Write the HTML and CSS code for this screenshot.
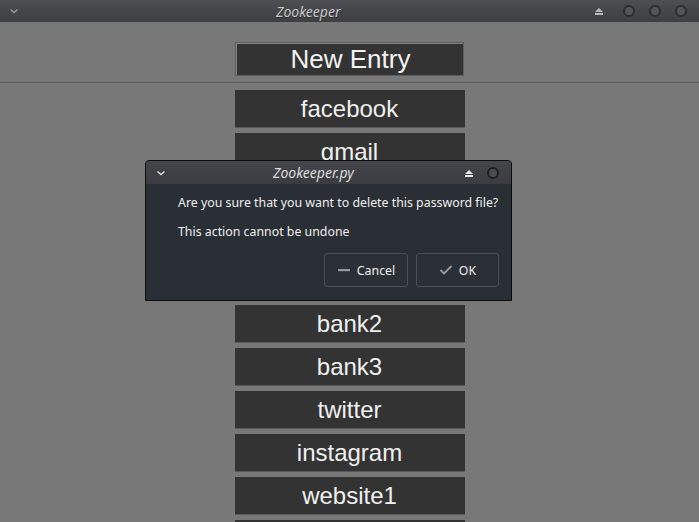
FILE: index.html
```html
<!DOCTYPE html>
<html>
<head>
<meta charset="utf-8">
<link rel="stylesheet" href="styles.css">
</head>
<body>
<div class="titlebar">
  <svg class="chev" width="12" height="8" viewBox="0 0 12 8"><path d="M2.5 2.5 L6 5.5 L9.5 2.5" fill="none" stroke="#9a9ba0" stroke-width="1.4"/></svg>
  <div class="title">Zookeeper</div>
  <div class="tb-icons">
    <svg width="12" height="12" viewBox="0 0 12 12"><path d="M2 7 L6 3 L10 7 Z" fill="#b8b9bd"/><rect x="2" y="8" width="8" height="2" fill="#b8b9bd"/></svg>
    <span class="circ"></span>
    <span class="circ"></span>
    <span class="circ"></span>
  </div>
</div>
<main class="main">
  <div class="newentry">New Entry</div>
  <div class="sep"></div>
  <div class="list">
    <div class="item">facebook</div>
    <div class="item">gmail</div>
    <div class="item">outlook</div>
    <div class="item">amazon</div>
    <div class="item">bank1</div>
    <div class="item">bank2</div>
    <div class="item">bank3</div>
    <div class="item">twitter</div>
    <div class="item">instagram</div>
    <div class="item">website1</div>
    <div class="item">website2</div>
  </div>
</main>
<div class="dialog">
  <div class="dtitlebar">
    <svg class="dchev" width="12" height="8" viewBox="0 0 12 8"><path d="M2.5 2.5 L6 5.5 L9.5 2.5" fill="none" stroke="#e0e0e0" stroke-width="1.4"/></svg>
    <div class="dtitle">Zookeeper.py</div>
    <div class="dt-icons">
      <svg width="12" height="12" viewBox="0 0 12 12"><path d="M2 7 L6 3 L10 7 Z" fill="#e6e6e6"/><rect x="2" y="8" width="8" height="2" fill="#e6e6e6"/></svg>
      <span class="circ dcirc"></span>
    </div>
  </div>
  <div class="dbody">
    <p class="msg1">Are you sure that you want to delete this password file?</p>
    <p class="msg2">This action cannot be undone</p>
    <div class="btns">
      <button class="btn cancel"><svg width="14" height="12" viewBox="0 0 14 12"><rect x="1" y="5" width="12" height="2.2" fill="#9a9ca0"/></svg>Cancel</button>
      <button class="btn ok"><svg width="14" height="12" viewBox="0 0 14 12"><path d="M1.5 6 L5 9.5 L12.5 2" fill="none" stroke="#9a9ca0" stroke-width="1.8"/></svg>OK</button>
    </div>
  </div>
</div>
</body>
</html>
```
FILE: styles.css
```css
html, body {
  margin: 0;
  padding: 0;
}
body {
  width: 699px;
  height: 522px;
  overflow: hidden;
  background: #787878;
  font-family: "Liberation Sans", Arial, sans-serif;
  position: relative;
}
.titlebar {
  height: 22px;
  background: linear-gradient(#4d4e52, #3e3f43);
  display: flex;
  align-items: center;
  position: relative;
}
.chev {
  margin-left: 8px;
}
.title {
  position: absolute;
  left: 276px;
  top: 2px;
  font-family: "Noto Sans", sans-serif;
  font-style: italic;
  font-size: 14px;
  color: #c8c8c8;
  text-shadow: 0 1px 0 #2a2a2a;
}
.tb-icons {
  margin-left: auto;
  margin-right: 12px;
  display: flex;
  align-items: center;
  gap: 14px;
}
.tb-icons svg {
  margin-right: 4px;
}
.circ {
  display: block;
  border-radius: 50%;
  border: 2px solid #2c2d30;
  background: #55565a;
  box-sizing: content-box;
  width: 8px;
  height: 8px;
}
.main {
  display: flex;
  flex-direction: column;
  align-items: center;
}
.newentry {
  margin-top: 20px;
  width: 225px;
  height: 32px;
  background: #333333;
  border: 1px solid #5e5e5e;
  box-shadow: inset 1px 1px 0 #858585;
  color: #f2f2f2;
  font-size: 26px;
  line-height: 33px;
  text-align: center;
  box-sizing: content-box;
  padding-left: 2px;
}
.sep {
  margin-top: 6px;
  width: 100%;
  height: 1px;
  background: #585858;
  border-bottom: 1px solid #7e7e7e;
}
.list {
  margin-top: 6px;
  display: flex;
  flex-direction: column;
  gap: 5px;
}
.item {
  width: 230px;
  height: 37px;
  background: #333333;
  border-bottom: 1px solid #5a5a5a;
  color: #f0f0f0;
  font-size: 24px;
  line-height: 37px;
  text-align: center;
}
.dialog {
  position: absolute;
  left: 145px;
  top: 160px;
  width: 365px;
  height: 139px;
  border: 1px solid #0c0c0c;
  border-radius: 4px 4px 0 0;
  background: #2a2e35;
  font-family: "Noto Sans", sans-serif;
  overflow: hidden;
}
.dtitlebar {
  height: 23px;
  background: linear-gradient(#44464b, #3a3c41);
  display: flex;
  align-items: center;
  position: relative;
}
.dchev {
  margin-left: 9px;
}
.dtitle {
  position: absolute;
  left: 127px;
  top: 2px;
  font-style: italic;
  font-size: 14px;
  color: #dcdcdc;
}
.dt-icons {
  margin-left: auto;
  margin-right: 12px;
  display: flex;
  align-items: center;
  gap: 12px;
}
.dcirc {
  background: #4a4c50;
  border-color: #1d1e21;
}
.dbody {
  padding: 0 0 0 32px;
  color: #eeeeee;
  font-size: 12.35px;
}
.msg1 {
  margin: 10px 0 0 0;
  line-height: 18px;
}
.msg2 {
  margin: 11px 0 0 0;
  line-height: 18px;
}
.btns {
  margin-top: 12px;
  margin-right: 12px;
  display: flex;
  justify-content: flex-end;
  gap: 8px;
}
.btn {
  height: 34px;
  box-sizing: border-box;
  border: 1px solid #4a4e56;
  border-radius: 3px;
  background: #2b2f36;
  color: #eeeeee;
  font-family: "Noto Sans", sans-serif;
  font-size: 12.35px;
  display: flex;
  align-items: center;
  justify-content: center;
  gap: 6px;
  padding: 0;
}
.cancel {
  width: 84px;
}
.ok {
  width: 83px;
}
```
